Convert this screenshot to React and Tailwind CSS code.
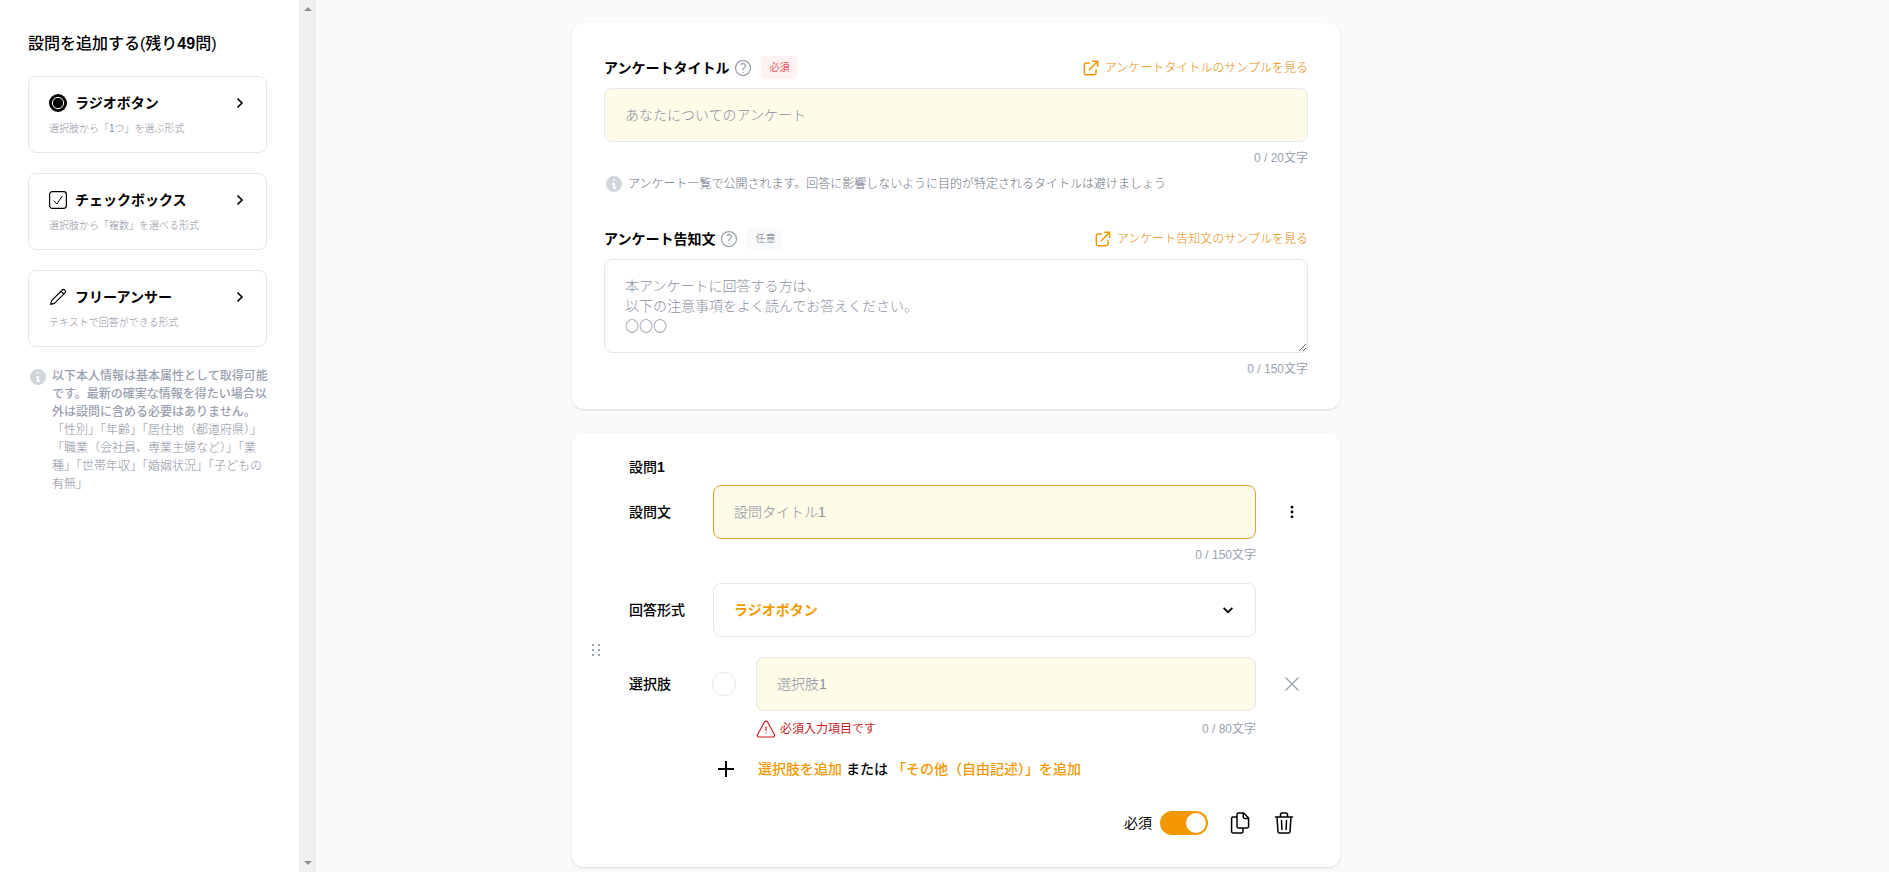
import { useState } from 'react';

const fieldBase =
  'block w-full rounded-lg border px-5 text-sm text-gray-900 placeholder:text-[#8b90a0] focus:outline-none';

const questionTypes = [
  { id: 'radio', name: 'ラジオボタン', note: '選択肢から「1つ」を選ぶ形式', Icon: RadioIcon },
  { id: 'checkbox', name: 'チェックボックス', note: '選択肢から「複数」を選べる形式', Icon: CheckIcon },
  { id: 'free', name: 'フリーアンサー', note: 'テキストで回答ができる形式', Icon: PencilIcon },
];

function Svg({ size = 'size-6', width = 1.5, children }) {
  return (
    <svg
      className={`${size} shrink-0`}
      viewBox="0 0 24 24"
      fill="none"
      stroke="currentColor"
      strokeWidth={width}
      strokeLinecap="round"
      strokeLinejoin="round"
      aria-hidden="true"
    >
      {children}
    </svg>
  );
}

function RadioIcon() {
  return (
    <svg className="size-[18px] shrink-0" viewBox="0 0 18 18" aria-hidden="true">
      <circle cx="9" cy="9" r="9" />
      <circle cx="9" cy="9" r="5.6" fill="none" stroke="#fff" strokeWidth="1" />
    </svg>
  );
}

function CheckIcon() {
  return (
    <svg className="size-[18px] shrink-0" viewBox="0 0 18 18" fill="none" stroke="currentColor" aria-hidden="true">
      <rect x="0.6" y="0.6" width="16.8" height="16.8" rx="2.8" strokeWidth="1.2" />
      <path d="M4.6 9.6 7.8 13 13.4 5" strokeWidth="1" />
    </svg>
  );
}

function PencilIcon() {
  return (
    <svg className="size-[18px] shrink-0" viewBox="0 0 18 18" fill="none" stroke="currentColor" strokeWidth="1.1" strokeLinejoin="round" aria-hidden="true">
      <path d="M1.600 16.400 2.600 12.600 13.200 2a1.700 1.700 0 0 1 2.400 0l.4.4a1.700 1.700 0 0 1 0 2.400L5.400 15.400Z" />
      <path d="M12 3.200 14.800 6" />
    </svg>
  );
}

function ChevronRight() {
  return (
    <svg className="size-5 shrink-0" viewBox="0 0 20 20" fill="none" stroke="currentColor" strokeWidth="1.6" aria-hidden="true">
      <path d="M7.500 5.500 12 10 7.500 14.500" />
    </svg>
  );
}

function InfoIcon() {
  return (
    <svg className="size-5 shrink-0 text-gray-300" viewBox="0 0 20 20" fill="currentColor" aria-hidden="true">
      <path fillRule="evenodd" clipRule="evenodd" d="M18 10a8 8 0 1 1-16 0 8 8 0 0 1 16 0zm-7-4a1 1 0 1 1-2 0 1 1 0 0 1 2 0zM9 9a1 1 0 0 0 0 2v3a1 1 0 0 0 1 1h1a1 1 0 1 0 0-2v-3a1 1 0 0 0-1-1H9z" />
    </svg>
  );
}

function HelpButton() {
  return (
    <button type="button" aria-label="ヘルプ" className="ml-1 text-gray-400">
      <Svg size="size-5">
        <path d="M9.879 7.519c1.171-1.025 3.071-1.025 4.242 0 1.172 1.025 1.172 2.687 0 3.712-.203.179-.43.326-.67.442-.745.361-1.45.999-1.45 1.827v.75M21 12a9 9 0 1 1-18 0 9 9 0 0 1 18 0zm-9 5.25h.008v.008H12v-.008z" />
      </Svg>
    </button>
  );
}

function SampleLink({ children }) {
  return (
    <a href="#sample" className="ml-auto flex items-center gap-1 text-xs font-light text-[#e88a00]">
      <span className="text-[#f39800]">
        <Svg size="size-5" width={1.8}>
          <path d="M10 6H6a2 2 0 0 0-2 2v10a2 2 0 0 0 2 2h10a2 2 0 0 0 2-2v-4M14 4h6m0 0v6m0-6L10 14" />
        </Svg>
      </span>
      {children}
    </a>
  );
}

function Counter({ children }) {
  return <p className="ml-auto text-xs/[18px] text-gray-400">{children}</p>;
}

function ScrollTrack() {
  return (
    <div className="flex w-[17px] shrink-0 flex-col items-center justify-between bg-[#f0f0f0] py-[7px] text-[#8f8f8f]" aria-hidden="true">
      <svg className="h-1 w-2" viewBox="0 0 8 4" fill="currentColor">
        <path d="M0 4 4 0 8 4z" />
      </svg>
      <svg className="h-1 w-2" viewBox="0 0 8 4" fill="currentColor">
        <path d="M0 0 4 4 8 0z" />
      </svg>
    </div>
  );
}

function Sidebar() {
  return (
    <aside className="w-[299px] shrink-0 bg-white pt-8 pr-8 pl-7">
      <h2 className="mb-5 text-base/6 font-medium text-black">
        設問を追加する(残り<b>49</b>問)
      </h2>
      <div className="flex flex-col gap-5">
        {questionTypes.map(({ id, name, note, Icon }) => (
          <button key={id} type="button" className="rounded-lg border border-gray-200 px-5 py-4 text-left">
            <span className="flex items-center">
              <Icon />
              <span className="ml-2 text-sm/5 font-bold">{name}</span>
              <span className="-mr-1 ml-auto">
                <ChevronRight />
              </span>
            </span>
            <span className="mt-2 block text-[10px]/[15px] font-light text-[#8b90a0]">{note}</span>
          </button>
        ))}
      </div>
      <div className="mt-5 flex gap-1 text-xs/[18px] text-gray-400">
        <InfoIcon />
        <div className="w-[216px] shrink-0">
          <p className="font-medium">
            以下本人情報は基本属性として取得可能です。最新の確実な情報を得たい場合以外は設問に含める必要はありません。
          </p>
          <p className="font-light text-[#8b90a0]">
            「性別」「年齢」「居住地（都道府県）」
            <br />
            「職業（会社員、専業主婦など）」「業種」「世帯年収」「婚姻状況」「子どもの有無」
          </p>
        </div>
      </div>
    </aside>
  );
}

function SurveyCard() {
  return (
    <section className="rounded-xl bg-white p-8 shadow-sm">
      <div className="mb-2 flex h-[25px] items-center">
        <label htmlFor="survey-title" className="text-sm font-bold">
          アンケートタイトル
        </label>
        <HelpButton />
        <span className="ml-2 flex h-[23px] w-9 items-center justify-center rounded bg-red-50 text-[10px] font-light text-red-600">
          必須
        </span>
        <SampleLink>アンケートタイトルのサンプルを見る</SampleLink>
      </div>
      <input
        id="survey-title"
        type="text"
        placeholder="あなたについてのアンケート"
        className={`${fieldBase} h-[54px] border-gray-200 bg-[#fefbe8] font-light`}
      />
      <div className="mt-[7px] flex">
        <Counter>0 / 20文字</Counter>
      </div>
      <p className="mt-[7px] flex items-center gap-1 text-xs/5 font-light text-gray-500">
        <InfoIcon />
        アンケート一覧で公開されます。回答に影響しないように目的が特定されるタイトルは避けましょう
      </p>

      <div className="mt-8 mb-2 flex h-[25px] items-center">
        <label htmlFor="survey-notice" className="text-sm font-bold">
          アンケート告知文
        </label>
        <HelpButton />
        <span className="ml-2 flex h-[23px] w-9 items-center justify-center rounded bg-gray-50 text-[10px] font-light text-gray-500">
          任意
        </span>
        <SampleLink>アンケート告知文のサンプルを見る</SampleLink>
      </div>
      <textarea
        id="survey-notice"
        rows={3}
        placeholder={'本アンケートに回答する方は、\n以下の注意事項をよく読んでお答えください。\n〇〇〇'}
        className={`${fieldBase} border-gray-200 bg-white py-4 leading-5 font-light`}
      />
      <div className="-mb-px mt-[7px] flex">
        <Counter>0 / 150文字</Counter>
      </div>
    </section>
  );
}

function Row({ label, htmlFor, action, children }) {
  return (
    <div className="flex">
      <label htmlFor={htmlFor} className="flex h-[54px] w-[84px] shrink-0 items-center text-sm font-medium">
        {label}
      </label>
      <div className="min-w-0 flex-1">{children}</div>
      <div className="flex h-[54px] w-[72px] shrink-0 items-center justify-center">{action}</div>
    </div>
  );
}

function QuestionCard() {
  const [required, setRequired] = useState(true);

  return (
    <section className="flex rounded-xl bg-white pt-6 pr-3 pb-8 shadow-sm">
      <button type="button" aria-label="並び替え" className="-mt-6 -mb-8 flex w-[57px] shrink-0 items-center pl-5 text-gray-400">
        <svg className="h-3 w-[9px]" viewBox="0 0 9 12" fill="currentColor" aria-hidden="true">
          <path d="M0 0h2v2H0zM6 0h2v2H6zM0 5h2v2H0zM6 5h2v2H6zM0 10h2v2H0zM6 10h2v2H6z" />
        </svg>
      </button>

      <div className="min-w-0 flex-1">
        <h3 className="mb-2 text-sm/5 font-medium">
          設問<b>1</b>
        </h3>

        <Row
          label="設問文"
          htmlFor="question-text"
          action={
            <button type="button" aria-label="メニュー">
              <svg className="size-5" viewBox="0 0 20 20" fill="currentColor" aria-hidden="true">
                <circle cx="10" cy="5.2" r="1.4" />
                <circle cx="10" cy="10" r="1.4" />
                <circle cx="10" cy="14.8" r="1.4" />
              </svg>
            </button>
          }
        >
          <input
            id="question-text"
            type="text"
            placeholder="設問タイトル1"
            className={`${fieldBase} h-[54px] border-[#dda23a] bg-[#fefbe8] font-light`}
          />
          <div className="mt-[7px] flex">
            <Counter>0 / 150文字</Counter>
          </div>
        </Row>

        <div className="mt-[19px]">
          <Row label="回答形式" htmlFor="question-type">
            <div className="relative">
              <select
                id="question-type"
                className="h-[54px] w-full appearance-none rounded-lg border border-gray-200 bg-white px-5 text-sm font-bold text-[#f39800]"
              >
                {questionTypes.map(({ id, name }) => (
                  <option key={id}>{name}</option>
                ))}
              </select>
              <svg className="pointer-events-none absolute top-[17px] right-[18px] size-5" viewBox="0 0 20 20" fill="none" stroke="currentColor" strokeWidth="1.7" aria-hidden="true">
                <path d="M5.600 7.800 10 12.200 14.400 7.800" />
              </svg>
            </div>
          </Row>
        </div>

        <div className="mt-5">
          <Row
            label="選択肢"
            htmlFor="choice-1"
            action={
              <button type="button" aria-label="削除" className="text-gray-400">
                <Svg width={1.3}>
                  <path d="M6 18 18 6M6 6l12 12" />
                </Svg>
              </button>
            }
          >
            <div className="flex">
              <div className="-ml-px flex h-[54px] w-11 shrink-0 items-center">
                <input type="radio" aria-label="選択肢1を選ぶ" className="size-6 appearance-none rounded-full border border-gray-200" />
              </div>
              <div className="flex-1">
                <input
                  id="choice-1"
                  type="text"
                  placeholder="選択肢1"
                  className={`${fieldBase} h-[54px] border-gray-200 bg-[#fefbe8] font-light`}
                />
                <div className="mt-2 flex h-5 items-center">
                  <p className="flex items-center gap-1 text-xs text-[#c81e1e]">
                    <Svg size="size-5" width={1.4}>
                      <path d="M12 9.5v4.2m0 2.8v.3M10.3 3.4 1.9 18.600a2 2 0 0 0 1.700 3h16.800a2 2 0 0 0 1.700-3L13.700 3.400a2 2 0 0 0-3.400 0z" />
                    </Svg>
                    必須入力項目です
                  </p>
                  <Counter>0 / 80文字</Counter>
                </div>
              </div>
            </div>
          </Row>
        </div>

        <div className="mt-[18px] flex h-6 items-center pl-[85px] text-sm font-medium">
          <div className="w-11 shrink-0">
            <Svg width={2}>
              <path d="M12 4v16M4 12h16" strokeLinecap="butt" />
            </Svg>
          </div>
          <button type="button" className="text-[#f39800]">
            選択肢を追加
          </button>
          <span className="mx-1">または</span>
          <button type="button" className="text-[#f39800]">
            「その他（自由記述）」を追加
          </button>
        </div>

        <div className="mt-[30px] flex h-6 items-center justify-end pr-8">
          <label className="flex items-center gap-2 text-sm">
            必須
            <input
              type="checkbox"
              role="switch"
              checked={required}
              onChange={(event) => setRequired(event.target.checked)}
              className="peer sr-only"
            />
            <span className="flex h-6 w-12 items-center rounded-full bg-gray-200 p-0.5 peer-checked:justify-end peer-checked:bg-[#f39800]">
              <span className="size-5 rounded-full bg-white" />
            </span>
          </label>
          <button type="button" aria-label="複製" className="ml-5">
            <Svg>
              <path d="M9 3.4a1.4 1.4 0 0 1 1.4-1.4H15.6L20.6 7v8.6a1.4 1.4 0 0 1-1.4 1.4H10.4a1.4 1.4 0 0 1-1.4-1.4zM15.2 2v4a1.4 1.4 0 0 0 1.4 1.4h4M9 6H5a1.4 1.4 0 0 0-1.4 1.4V20.6A1.4 1.4 0 0 0 5 22h8.6a1.4 1.4 0 0 0 1.4-1.4V17" />
            </Svg>
          </button>
          <button type="button" aria-label="設問を削除" className="ml-5">
            <Svg>
              <path d="M3.5 6h17M5 6l1 14.6a1.5 1.5 0 0 0 1.5 1.4h9a1.5 1.5 0 0 0 1.5-1.4L19 6M8.5 6V3.5A1.5 1.5 0 0 1 10 2h4a1.5 1.5 0 0 1 1.5 1.5V6M9.5 9.5l.4 9M14.5 9.5l-.4 9" />
            </Svg>
          </button>
        </div>
      </div>
    </section>
  );
}

function App() {
  return (
    <div className="flex min-h-screen bg-[#f9fafc] font-['Liberation_Sans','Noto_Sans_CJK_JP',sans-serif] text-black">
      <Sidebar />
      <ScrollTrack />
      <main className="min-w-0 flex-1 pt-[23px] pl-64">
        <div className="flex max-w-3xl flex-col gap-6">
          <SurveyCard />
          <QuestionCard />
        </div>
      </main>
    </div>
  );
}

export default App;
